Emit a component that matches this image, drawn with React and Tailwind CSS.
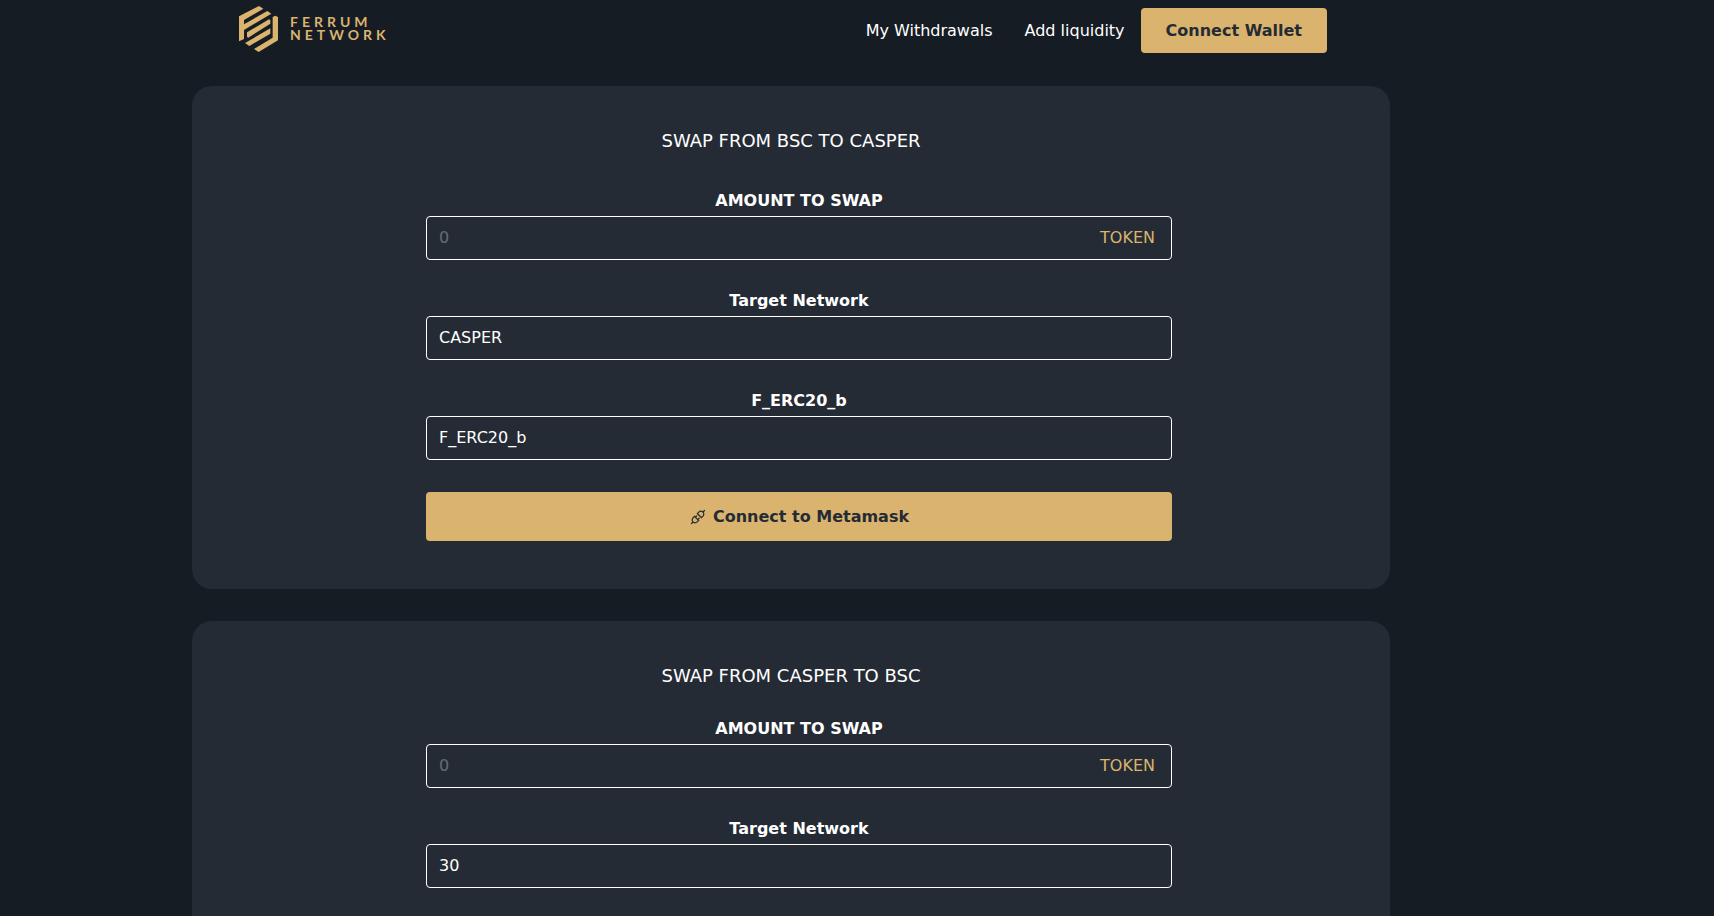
import { AiOutlineApi } from "react-icons/ai";

function Logo() {
  return (
    <a href="#" aria-label="Ferrum Network" className="flex items-center gap-[11px] text-[#dab36f]">
      <svg width="40" height="46" viewBox="9 12 120 138" fill="currentColor" aria-hidden="true">
        <path d="M9 43 L69 12 L82 20 L24 54 V67 L94 27 L106 35 L24 84 V111 L9 118 Z" />
        <path d="M33 91 L99 52 L103 54 V65 L37 107 L33 105 Z" />
        <path d="M27 123 L103 79 V95 L40 132 Z" />
        <path d="M54 141 L110 107 V45 L118 41 L126 45 V115 L68 150 Z" />
      </svg>
      <span className="flex flex-col pb-[2px] font-['Lato',sans-serif] text-[14px] leading-[13px] font-bold tracking-[4px]">
        <span>FERRUM</span>
        <span>NETWORK</span>
      </span>
    </a>
  );
}

function Field({ id, label, placeholder, value, suffix }) {
  return (
    <div className="flex flex-col gap-[3px]">
      <label htmlFor={id} className="text-center leading-6 font-bold">
        {label}
      </label>
      <div className="flex h-11 items-center rounded border border-white pr-4 pl-3">
        <input
          id={id}
          type="text"
          placeholder={placeholder}
          defaultValue={value}
          className="min-w-0 flex-1 bg-transparent leading-6 text-white outline-none placeholder:text-[#656c76]"
        />
        {suffix && <span className="text-[#dab36f]">{suffix}</span>}
      </div>
    </div>
  );
}

function SwapCard({ title, formClass, action, children }) {
  return (
    <section className="rounded-[20px] bg-[#252b34] pt-[41px] pb-12">
      <h2 className="text-center text-[18px] leading-7">{title}</h2>
      <div className={formClass}>
        <form className="mx-auto w-[746px] max-w-full" onSubmit={(e) => e.preventDefault()}>
          <div className="flex flex-col gap-[29px]">{children}</div>
          {action && (
            <button
              type="submit"
              className="mt-8 flex h-[49px] w-full items-center justify-center gap-[6px] rounded bg-[#dab36f] font-bold text-[#252b34]"
            >
              <AiOutlineApi size={18} aria-hidden="true" />
              {action}
            </button>
          )}
        </form>
      </div>
    </section>
  );
}

export default function App() {
  return (
    <div className="h-screen overflow-hidden bg-[#161c23] font-['DejaVu_Sans',sans-serif] text-[16px] leading-6 text-white">
      <header className="flex items-start justify-between pt-[6px] pr-[387px] pl-[239px]">
        <Logo />
        <nav className="flex items-center pt-[2px] whitespace-nowrap">
          <a href="#withdrawals" className="mr-8">My Withdrawals</a>
          <a href="#liquidity" className="mr-4">Add liquidity</a>
          <button type="button" className="h-[45px] rounded bg-[#dab36f] px-[25px] font-bold text-[#252b34]">
            Connect Wallet
          </button>
        </nav>
      </header>
      <main className="flex flex-col gap-8 pt-[33px] pr-[324px] pl-48">
        <SwapCard title="SWAP FROM BSC TO CASPER" formClass="pt-[34px] pl-4" action="Connect to Metamask">
          <Field id="bsc-amount" label="AMOUNT TO SWAP" placeholder="0" suffix="TOKEN" />
          <Field id="bsc-network" label="Target Network" value="CASPER" />
          <Field id="bsc-token" label="F_ERC20_b" value="F_ERC20_b" />
        </SwapCard>
        <SwapCard title="SWAP FROM CASPER TO BSC" formClass="pt-[27px] pl-4">
          <Field id="casper-amount" label="AMOUNT TO SWAP" placeholder="0" suffix="TOKEN" />
          <Field id="casper-network" label="Target Network" value="30" />
        </SwapCard>
      </main>
    </div>
  );
}
